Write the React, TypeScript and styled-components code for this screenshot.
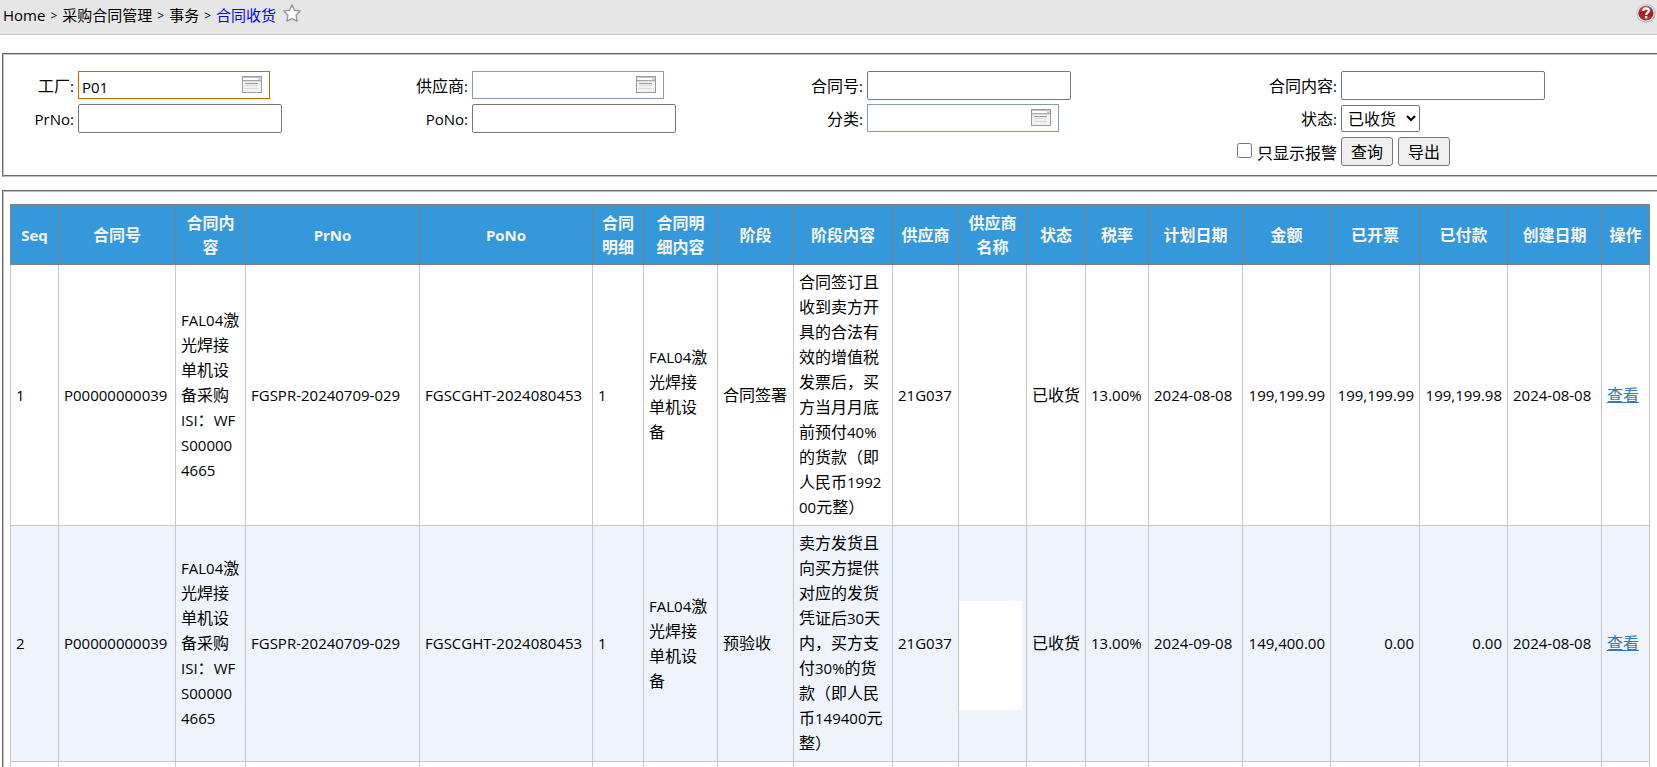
import React from 'react';
import styled, { createGlobalStyle, css } from 'styled-components';

const GlobalStyle = createGlobalStyle`
  *, *::before, *::after { box-sizing: border-box; }
  html, body { margin: 0; background: #fff; }
  body {
    height: 100vh;
    overflow: hidden;
    color: #000;
    font-family: "Open Sans", "Noto Sans CJK SC", sans-serif;
    font-size: 16px;
    line-height: 24px;
  }
  input, select, button { font: inherit; color: inherit; }
`;

/* ---------- text ---------- */

const Latin = styled.span`
  font-size: 15px;
`;

/* Latin runs are set one size below the Chinese text around them. */
function Mixed({ text }: { text: string }) {
  const runs = text.match(/[\n\x20-\x7e]+|[^\n\x20-\x7e]+/g) ?? [];
  return (
    <>
      {runs.map((run, i) =>
        /^[\n\x20-\x7e]/.test(run) ? <Latin key={i}>{run}</Latin> : <React.Fragment key={i}>{run}</React.Fragment>,
      )}
    </>
  );
}

/* ---------- top bar ---------- */

const TopBar = styled.header`
  display: flex;
  align-items: flex-start;
  justify-content: space-between;
  height: 35px;
  padding: 3px 1px 0 3px;
  background: #e6e6e6;
  border-bottom: 1px solid #c8c8c8;
`;

const Crumbs = styled.nav`
  display: flex;
  align-items: flex-start;
  gap: 5px;
  font-size: 15px;
`;

const Crumb = styled.a<{ $current?: boolean }>`
  color: ${(p) => (p.$current ? '#0000ff' : '#000')};
  text-decoration: none;
`;

const Separator = styled.span`
  font-size: 12px;
  line-height: 26px;
`;

const IconButton = styled.button`
  display: block;
  padding: 0;
  border: 0;
  background: none;
  line-height: 0;
  cursor: pointer;
`;

const FavouriteButton = styled(IconButton)`
  margin-left: 2px;
`;

function Star() {
  return (
    <svg width="18" height="20" viewBox="0 0 18 20" aria-hidden="true">
      <path
        d="M9 2 11.5 7.2 17.2 7.9 13.2 12 14 18 9 15.6 4 18 4.8 12 0.8 7.9 6.5 7.2Z"
        fill="#fff"
        stroke="#999"
        strokeWidth="1.5"
        strokeLinejoin="round"
      />
    </svg>
  );
}

function Help() {
  return (
    <svg width="20" height="20" viewBox="0 0 20 20" aria-hidden="true">
      <defs>
        <linearGradient id="helpFill" x1="0" y1="0" x2="0" y2="1">
          <stop offset="0" stopColor="#c9686a" />
          <stop offset="0.5" stopColor="#a11c1c" />
          <stop offset="1" stopColor="#b83a35" />
        </linearGradient>
      </defs>
      <circle cx="10" cy="10.3" r="9.6" fill="#b4bcc4" />
      <circle cx="9.7" cy="9.8" r="8.6" fill="#e4e9ee" />
      <circle cx="9.9" cy="10" r="7.6" fill="url(#helpFill)" />
      <path d="M7.2 8.1C7.2 4.4 12.9 4.4 12.9 7.8 12.9 9.9 10.1 9.7 10.1 12" fill="none" stroke="#fff" strokeWidth="2.2" />
      <rect x="8.9" y="13" width="2.4" height="2.4" fill="#fff" />
    </svg>
  );
}

/* ---------- panels ---------- */

const Panel = styled.section`
  margin: 0 -4px 0 2px;
  border: 2px groove #c0c0c0;
`;

const FilterPanel = styled(Panel)`
  margin-top: 18px;
  padding: 16px 2px 9px 0;
`;

const TablePanel = styled(Panel)`
  margin-top: 13px;
  padding: 12px 9px 12px 6px;
`;

/* ---------- filter form ---------- */

const FilterForm = styled.form`
  display: grid;
  grid-template-columns: 70fr 310fr 76fr 310fr 77fr 310fr 156fr 316fr;
  grid-auto-rows: 29px;
  gap: 4px;
`;

const Label = styled.label`
  padding-top: 3px;
  text-align: right;
  white-space: nowrap;
`;

const Field = styled.div<{ $column?: number }>`
  display: flex;
  align-items: flex-start;
  gap: 5px;
  ${(p) => p.$column && css`grid-column: ${p.$column};`}
`;

const TextInput = styled.input`
  width: 204px;
  height: 29px;
  padding: 1px 3px;
  border: 1px solid #767676;
  border-radius: 2px;
  background: #fff;
`;

const LookupBox = styled.div<{ $active?: boolean }>`
  display: flex;
  align-items: flex-start;
  width: 192px;
  height: 28px;
  padding-right: 7px;
  border: 1px solid ${(p) => (p.$active ? '#cc6600' : '#7f9db9')};
  background: #fff;
`;

const LookupInput = styled.input`
  flex: 1;
  min-width: 0;
  height: 26px;
  padding: 3px 3px 0;
  border: 0;
  outline: 0;
  background: none;
  font-size: 15px;
`;

const LookupButton = styled(IconButton)`
  padding-top: 4px;
`;

const StatusSelect = styled.select`
  align-self: center;
  height: 27px;
  width: 79px;
  padding: 0 2px;
  border: 1px solid #767676;
  border-radius: 2px;
  background: #fff;
`;

const ActionButton = styled.button`
  width: 52px;
  height: 29px;
  padding: 0;
  border: 1px solid #767676;
  border-radius: 3px;
  background: #efefef;
`;

const AlarmOption = styled.label`
  grid-column: 7;
  display: flex;
  justify-content: flex-end;
  align-items: flex-start;
  gap: 5px;
  padding-top: 4px;
  white-space: nowrap;
`;

const Checkbox = styled.input`
  width: 15px;
  height: 15px;
  margin: 2px 0 0;
`;

function Lookup({ id, value = '', active }: { id: string; value?: string; active?: boolean }) {
  return (
    <LookupBox $active={active}>
      <LookupInput id={id} defaultValue={value} />
      <LookupButton type="button" aria-label="选择">
        <svg width="20" height="17" viewBox="0 0 20 17" shapeRendering="crispEdges" aria-hidden="true">
          <rect width="20" height="17" fill="#999" />
          <rect x="1" y="1" width="18" height="15" fill="#f3f3f3" />
          <rect x="1" y="1" width="18" height="1" fill="#c4c4c4" />
          <rect x="1" y="2" width="15" height="2" fill="#fff" />
          <rect x="16" y="1" width="3" height="3" fill="#d0d0d0" />
          <rect x="1" y="4" width="18" height="1" fill="#a8a8a8" />
          <rect x="1" y="5" width="18" height="1" fill="#dcdcdc" />
          <rect x="3" y="7" width="13" height="1" fill="#999" />
          <rect x="3" y="9" width="13" height="1" fill="#d8d8d8" />
          <rect x="3" y="12" width="13" height="1" fill="#d8d8d8" />
        </svg>
      </LookupButton>
    </LookupBox>
  );
}

function Filters() {
  return (
    <FilterForm onSubmit={(e) => e.preventDefault()}>
      <Label htmlFor="plant"><Mixed text="工厂:" /></Label>
      <Field><Lookup id="plant" value="P01" active /></Field>
      <Label htmlFor="supplier"><Mixed text="供应商:" /></Label>
      <Field><Lookup id="supplier" /></Field>
      <Label htmlFor="contractNo"><Mixed text="合同号:" /></Label>
      <Field><TextInput id="contractNo" /></Field>
      <Label htmlFor="contractText"><Mixed text="合同内容:" /></Label>
      <Field><TextInput id="contractText" /></Field>

      <Label htmlFor="prNo"><Mixed text="PrNo:" /></Label>
      <Field><TextInput id="prNo" /></Field>
      <Label htmlFor="poNo"><Mixed text="PoNo:" /></Label>
      <Field><TextInput id="poNo" /></Field>
      <Label htmlFor="category"><Mixed text="分类:" /></Label>
      <Field><Lookup id="category" /></Field>
      <Label htmlFor="status"><Mixed text="状态:" /></Label>
      <Field>
        <StatusSelect id="status" defaultValue="received">
          <option value="received">已收货</option>
        </StatusSelect>
      </Field>

      <AlarmOption>
        <Checkbox type="checkbox" />
        只显示报警
      </AlarmOption>
      <Field $column={8}>
        <ActionButton type="submit">查询</ActionButton>
        <ActionButton type="button">导出</ActionButton>
      </Field>
    </FilterForm>
  );
}

/* ---------- contract table ---------- */

const Table = styled.table`
  width: 100%;
  table-layout: fixed;
  border-collapse: collapse;
`;

const Col = styled.col<{ $width: number }>`
  width: ${(p) => p.$width}px;
`;

const HeadCell = styled.th`
  height: 60px;
  padding: 5px;
  border: 1px solid #808080;
  background: #3498db;
  color: #f5f5f5;
  font-weight: 700;
`;

const Row = styled.tr`
  &:nth-child(even) { background: #eef3fc; }
`;

const Cell = styled.td<{ $wrap?: boolean; $right?: boolean }>`
  padding: 5px;
  border: 1px solid #c8c8c8;
  line-height: 25px;
  text-align: ${(p) => (p.$right ? 'right' : 'left')};
  white-space: ${(p) => (p.$wrap ? 'pre-line' : 'nowrap')};
  word-break: ${(p) => (p.$wrap ? 'break-all' : 'normal')};
`;

const NameCell = styled(Cell)`
  padding: 24px 0 0;
`;

const BlankName = styled.div`
  width: 63px;
  height: 109px;
  background: #fff;
`;

const ViewLink = styled.a`
  color: #337ab7;
  text-decoration: underline;
`;

type Column = { title: string; width: number; wrap?: boolean; right?: boolean };

const columns: Column[] = [
  { title: 'Seq', width: 48 },
  { title: '合同号', width: 117 },
  { title: '合同内容', width: 70, wrap: true },
  { title: 'PrNo', width: 174 },
  { title: 'PoNo', width: 173 },
  { title: '合同明细', width: 51 },
  { title: '合同明细内容', width: 74, wrap: true },
  { title: '阶段', width: 76 },
  { title: '阶段内容', width: 99, wrap: true },
  { title: '供应商', width: 66 },
  { title: '供应商名称', width: 68 },
  { title: '状态', width: 59 },
  { title: '税率', width: 63 },
  { title: '计划日期', width: 94 },
  { title: '金额', width: 88, right: true },
  { title: '已开票', width: 89, right: true },
  { title: '已付款', width: 88, right: true },
  { title: '创建日期', width: 94 },
  { title: '操作', width: 48 },
];

const NAME_COLUMN = 10;

const rows: string[][] = [
  [
    '1', 'P00000000039', 'FAL04激光焊接单机设备采购\nISI：WFS000004665', 'FGSPR-20240709-029',
    'FGSCGHT-2024080453', '1', 'FAL04激光焊接单机设备', '合同签署',
    '合同签订且收到卖方开具的合法有效的增值税发票后，买方当月月底前预付40%的货款（即人民币199200元整）',
    '21G037', '', '已收货', '13.00%', '2024-08-08', '199,199.99', '199,199.99', '199,199.98', '2024-08-08',
  ],
  [
    '2', 'P00000000039', 'FAL04激光焊接单机设备采购\nISI：WFS000004665', 'FGSPR-20240709-029',
    'FGSCGHT-2024080453', '1', 'FAL04激光焊接单机设备', '预验收',
    '卖方发货且向买方提供对应的发货凭证后30天内，买方支付30%的货款（即人民币149400元整）',
    '21G037', '', '已收货', '13.00%', '2024-09-08', '149,400.00', '0.00', '0.00', '2024-08-08',
  ],
];

function ContractTable() {
  return (
    <Table>
      <colgroup>
        {columns.map((c) => <Col key={c.title} $width={c.width} />)}
      </colgroup>
      <thead>
        <tr>
          {columns.map((c) => <HeadCell key={c.title} scope="col"><Mixed text={c.title} /></HeadCell>)}
        </tr>
      </thead>
      <tbody>
        {rows.map((values) => (
          <Row key={values[0]}>
            {values.map((value, i) =>
              i === NAME_COLUMN ? (
                <NameCell key={i}><BlankName /></NameCell>
              ) : (
                <Cell key={i} $wrap={columns[i].wrap} $right={columns[i].right}><Mixed text={value} /></Cell>
              ),
            )}
            <Cell><ViewLink href="#view">查看</ViewLink></Cell>
          </Row>
        ))}
        <Row>
          {columns.map((c) => <Cell key={c.title}>&nbsp;</Cell>)}
        </Row>
      </tbody>
    </Table>
  );
}

export default function App() {
  return (
    <>
      <GlobalStyle />
      <TopBar>
        <Crumbs aria-label="位置">
          <Crumb href="#home">Home</Crumb>
          <Separator>&gt;</Separator>
          <Crumb href="#contracts">采购合同管理</Crumb>
          <Separator>&gt;</Separator>
          <Crumb href="#transactions">事务</Crumb>
          <Separator>&gt;</Separator>
          <Crumb href="#receipt" $current>合同收货</Crumb>
          <FavouriteButton type="button" aria-label="收藏"><Star /></FavouriteButton>
        </Crumbs>
        <IconButton type="button" aria-label="帮助"><Help /></IconButton>
      </TopBar>
      <main>
        <FilterPanel><Filters /></FilterPanel>
        <TablePanel><ContractTable /></TablePanel>
      </main>
    </>
  );
}
